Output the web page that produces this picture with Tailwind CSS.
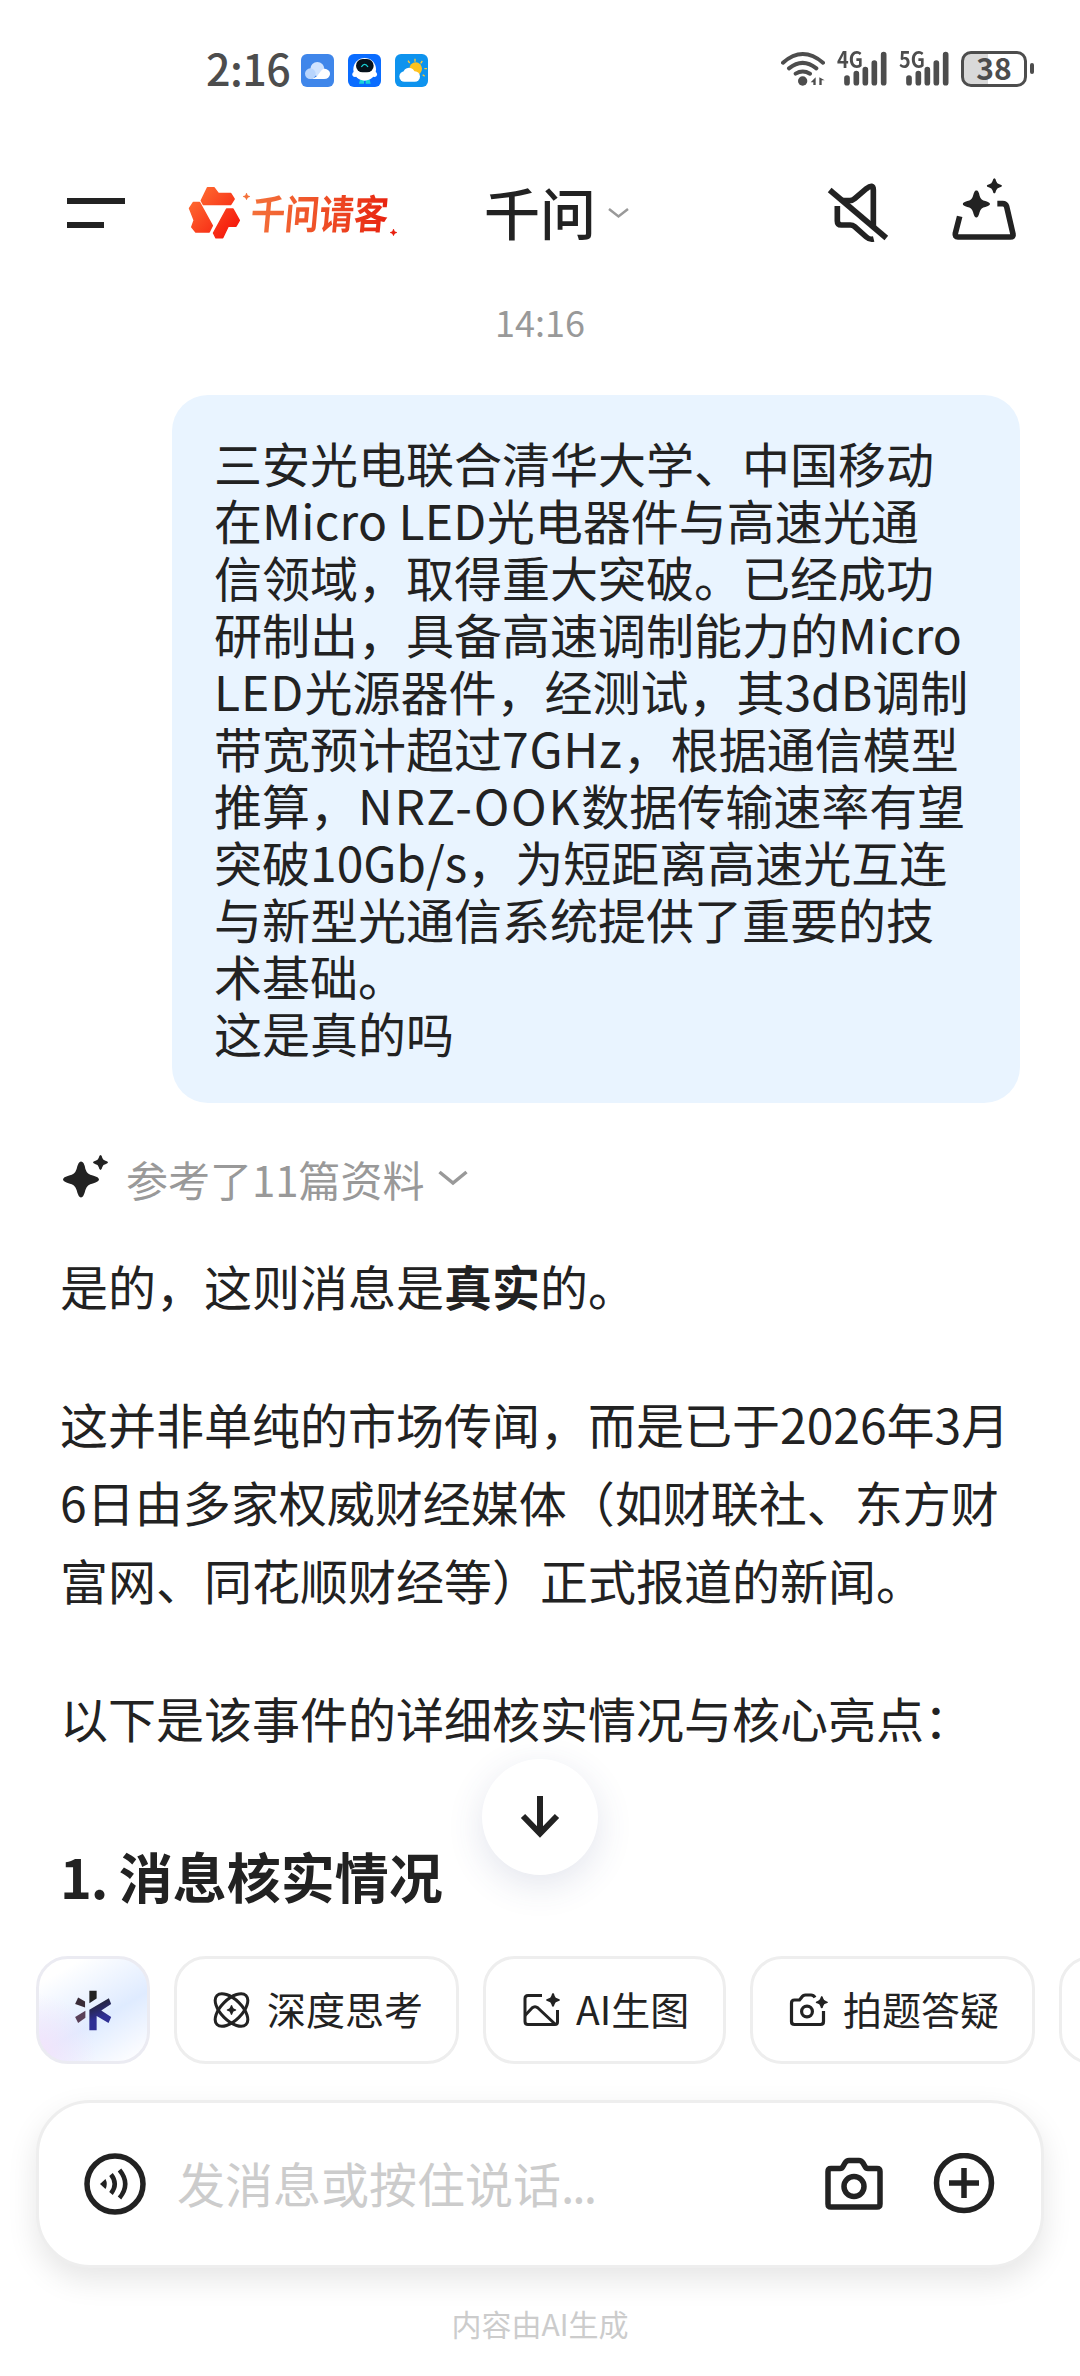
<!DOCTYPE html>
<html lang="zh-CN">
<head>
    <meta charset="UTF-8" />
    <meta name="viewport" content="width=device-width, initial-scale=1.0" />
    <title>千问</title>
    <script src="https://cdn.jsdelivr.net/npm/@tailwindcss/browser@4"></script>
</head>
<body class="bg-white font-['Noto_Sans_CJK_SC',sans-serif] text-[#222]">

<!-- 公用图形 -->
<svg class="hidden">
    <symbol id="star" viewBox="0 0 82 82">
        <path d="M41 0Q48 0 51 17Q55 30 68 32Q82 36 82 41Q82 46 68 50Q55 52 51 65Q47 82 41 82Q35 82 31 65Q27 52 14 50Q0 46 0 41Q0 36 14 32Q27 30 31 17Q35 0 41 0Z" fill="currentColor" stroke="none"/>
    </symbol>
    <symbol id="bars" viewBox="0 0 150 120">
        <g stroke="currentColor" stroke-width="17" stroke-linecap="round">
            <path d="M30 84V98M58 71V98M85 59V98M112 39V98M140 14V98"/>
        </g>
    </symbol>
</svg>

<div class="flex h-[2376px] w-[1080px] flex-col overflow-hidden">
    <!-- 状态栏 -->
    <div class="flex h-[140px] shrink-0 items-center pr-[46px] pl-[206px] text-[#4d4d4d]">
        <span class="w-[95px] pb-[5px] text-[43px] leading-none font-medium tracking-[-0.5px]">2:16</span>
        <div class="flex gap-[14px]">
            <svg class="size-[33px] rounded-[6px]" viewBox="0 0 99 99">
                <rect width="99" height="99" fill="#3f86ea"/>
                <circle cx="49" cy="45" r="21" fill="#cfe3ff"/>
                <circle cx="28" cy="59" r="16" fill="#b8d5fd"/>
                <path d="M24 75Q44 75 56 56Q66 40 77 46Q88 51 87 61Q85 75 69 75Z" fill="#fff"/>
            </svg>
            <svg class="size-[33px] rounded-[6px]" viewBox="0 0 99 99">
                <rect width="99" height="99" fill="#0a6cff"/>
                <path d="M36 77h12v12H33zM53 77h12l3 12H53z" fill="#19d3d8"/>
                <circle cx="50" cy="46" r="34" fill="#fff"/>
                <circle cx="21" cy="61" r="8" fill="#fff"/>
                <circle cx="79" cy="61" r="8" fill="#fff"/>
                <rect x="24" y="15" width="53" height="40" rx="20" fill="#06121c"/>
                <path d="M40 39Q50 23 60 39" fill="none" stroke="#19d3d8" stroke-width="4"/>
            </svg>
            <svg class="size-[33px] rounded-[6px]" viewBox="0 0 99 99">
                <rect width="99" height="99" fill="#0e93ee"/>
                <path d="M60 14v9M39 20l5 7M82 21l-5 7M88 44h8M83 62l6 5" stroke="#ffc933" stroke-width="4"/>
                <circle cx="62" cy="44" r="19" fill="#ffc21f"/>
                <circle cx="42" cy="58" r="17" fill="#fff"/>
                <rect x="13" y="52" width="62" height="31" rx="15.500" fill="#fff"/>
            </svg>
        </div>
        <div class="ml-auto flex items-center gap-[12px]">
            <svg class="h-[40px] w-[44px]" viewBox="60 30 132 120" fill="none" stroke="currentColor" stroke-width="12" stroke-linecap="round">
                <path d="M66 68Q125 16 186 68M84 85Q125 52 166 85M104 101Q125 88 147 101"/>
                <circle cx="125" cy="123" r="14" fill="currentColor" stroke="none"/>
                <path d="M149 127L164 112V135H157V127ZM175 112L191 121H182V135H175Z" fill="currentColor" stroke="none"/>
            </svg>
            <div class="relative h-[40px] w-[50px]">
                <svg class="h-[40px] w-[50px]"><use href="#bars"/></svg>
                <span class="absolute -top-[2px] left-0 origin-left scale-x-90 text-[22px] leading-[20px] font-bold">4G</span>
            </div>
            <div class="relative h-[40px] w-[50px]">
                <svg class="h-[40px] w-[50px]"><use href="#bars"/></svg>
                <span class="absolute -top-[2px] left-0 origin-left scale-x-90 text-[22px] leading-[20px] font-bold">5G</span>
            </div>
            <div class="flex items-center gap-[3px]">
                <div class="-mt-[3px] flex h-[36px] w-[66px] items-center justify-center rounded-[10px] border-[3px] border-[#4d4d4d] bg-[linear-gradient(90deg,#d9d9d9_40%,#fff_40%)] pb-[3px] text-[30px] leading-none font-bold">38</div>
                <div class="-mt-[3px] h-[11px] w-[4px] rounded-[2px] bg-[#4d4d4d]"></div>
            </div>
        </div>
    </div>

    <!-- 顶部导航 -->
    <header class="flex h-[146px] shrink-0 items-center pr-[63px] pl-[67px]">
        <div class="flex w-[58px] flex-col gap-[18px]">
            <div class="h-[6px] bg-[#222]"></div>
            <div class="h-[6px] w-[37px] bg-[#222]"></div>
        </div>
        <div class="relative ml-[61px] flex w-[210px] items-center">
            <svg class="h-[56px] w-[56px] shrink-0" viewBox="0 0 56 56">
                <defs>
                    <linearGradient id="logo" gradientUnits="userSpaceOnUse" x1="5" y1="8" x2="48" y2="48">
                        <stop offset="0" stop-color="#ff7033"/>
                        <stop offset="1" stop-color="#f5170c"/>
                    </linearGradient>
                </defs>
                <g fill="url(#logo)" stroke="url(#logo)" stroke-width="1.500" stroke-linejoin="round">
                    <path d="M15.300 15.700L21.600 2.700H28L32.300 8.400H44.600L48.100 14L44.600 19.500H17.500Z"/>
                    <path d="M3.500 23.300L7.400 17.500H13.600L26.300 40.700L23.200 47H9.800L5.800 42L8.200 35.300Z"/>
                    <path d="M40.600 24H47L53.300 35.300L50 41.200H42.200L36.700 52.800H30L27.500 48Z"/>
                </g>
            </svg>
            <span class="-mt-[2px] ml-[9px] inline-block shrink-0 origin-left scale-x-[0.86] -skew-x-6 bg-linear-to-r from-[#f4713a] to-[#e8200f] bg-clip-text text-[40px] leading-[56px] font-bold whitespace-nowrap text-transparent">千问请客</span>
            <svg class="absolute top-[8px] left-[57px] size-[7px] text-[#f4713a]"><use href="#star"/></svg>
            <svg class="absolute top-[44px] left-[204px] size-[7px] text-[#e8200f]"><use href="#star"/></svg>
        </div>
        <h1 class="-mt-[5px] ml-[88px] w-[110px] text-[56px] leading-none font-medium whitespace-nowrap">千问</h1>
        <svg class="ml-[14px] h-[12px] w-[21px]" viewBox="0 0 21 12" fill="none" stroke="#999" stroke-width="2.500"><path d="M1 2L10.500 9.500L20 2"/></svg>
        <svg class="ml-auto size-[62px]" viewBox="200 66 186 186" fill="none" stroke="currentColor" stroke-width="17">
            <path d="M245 122H268Q276 122 283 116L318 86Q339 70 339 90V200"/>
            <path d="M231 138V183Q231 195 243 195H270Q277 195 283 200L318 231Q328 240 340 237"/>
            <path d="M208 90L378 234"/>
        </svg>
        <svg class="ml-[62px] h-[72px] w-[66px]" viewBox="573 51 198 216" fill="none" stroke="currentColor" stroke-width="17">
            <path d="M599 169L586 220Q584 231 594 231H751Q761 231 759 222L740 140Q737 131 728 131H712"/>
            <use href="#star" x="608" y="91" width="82" height="82"/>
            <use href="#star" x="680" y="54" width="46" height="47"/>
        </svg>
    </header>

    <!-- 对话内容 -->
    <main class="relative flex shrink-0 flex-col px-[60px] text-[48px]">
        <time class="mt-[8px] text-center text-[36px] leading-[54px] text-[#999]">14:16</time>

        <div class="mt-[47px] h-[708px] w-[848px] self-end rounded-[36px] bg-[#e9f4ff] pt-[39px] pl-[42px] leading-[57px] whitespace-nowrap">
            <p>三安光电联合清华大学、中国移动</p>
            <p>在<span class="tracking-[0.3px]">Micro LED</span>光电器件与高速光通</p>
            <p>信领域，取得重大突破。已经成功</p>
            <p>研制出，具备高速调制能力的Micro</p>
            <p><span class="tracking-[1px]">LED</span>光源器件，经测试，其3dB调制</p>
            <p>带宽预计超过<span class="tracking-[0.8px]">7GHz</span>，根据通信模型</p>
            <p>推算，<span class="tracking-[1.8px]">NRZ-OOK</span>数据传输速率有望</p>
            <p>突破10Gb/s，为短距离高速光互连</p>
            <p>与新型光通信系统提供了重要的技</p>
            <p>术基础。</p>
            <p>这是真的吗</p>
        </div>

        <div class="mt-[45px] flex h-[60px] items-center text-[42px] text-[#999]">
            <div class="flex w-[66px] shrink-0">
                <svg class="h-[48px] w-[50px] text-[#222]" viewBox="0 0 50 48">
                    <use href="#star" x="3" y="7" width="36" height="37"/>
                    <use href="#star" x="33" y="1" width="15" height="15"/>
                </svg>
            </div>
            <span>参考了11篇资料</span>
            <svg class="ml-[13px] h-[16px] w-[30px]" viewBox="0 0 30 16" fill="none" stroke="currentColor" stroke-width="3.500"><path d="M1.500 2L15 13L28.500 2"/></svg>
        </div>

        <p class="mt-[38px] leading-[78px]">是的，这则消息是<b>真实</b>的。</p>
        <p class="mt-[60px] leading-[78px] whitespace-nowrap">这并非单纯的市场传闻，而是已于2026年3月<br>6日由多家权威财经媒体（如财联社、东方财<br>富网、同花顺财经等）正式报道的新闻。</p>
        <p class="mt-[60px] leading-[78px]">以下是该事件的详细核实情况与核心亮点：</p>
        <h2 class="mt-[79px] text-[54px] leading-[81px] font-bold"><span class="tracking-[-1px]">1. </span>消息核实情况</h2>

        <!-- 回到底部 -->
        <button class="absolute bottom-[41px] left-[482px] flex size-[116px] items-center justify-center rounded-full bg-white shadow-[0_10px_36px_rgba(60,70,130,0.14)]">
            <svg class="h-[44px] w-[40px]" viewBox="0 0 40 44" fill="none" stroke="currentColor" stroke-width="6"><path d="M20 1V38M3 21L20 38.500L37 21"/></svg>
        </button>
    </main>

    <!-- 快捷功能 -->
    <nav class="mt-[40px] flex h-[108px] shrink-0 gap-[24px] pl-[36px] text-[39px] whitespace-nowrap">
        <div class="flex w-[114px] shrink-0 items-center justify-center rounded-[32px] border-[3px] border-[#ebebf2] bg-[radial-gradient(circle_at_0%_90%,#f3e4fb_0%,transparent_40%),linear-gradient(150deg,#fff_15%,#dfebff_58%,#fbfcff_92%)]">
            <svg class="h-[41px] w-[38px]" viewBox="159 148 114 124">
                <defs>
                    <linearGradient id="ask" gradientUnits="userSpaceOnUse" x1="200" y1="160" x2="240" y2="260">
                        <stop offset="0.200" stop-color="#222"/>
                        <stop offset="0.750" stop-color="#2f2f94"/>
                    </linearGradient>
                </defs>
                <g fill="url(#ask)">
                    <path d="M205 150H227V174L205 188Z"/>
                    <path d="M264 173L271 190L241 210L271 230L263 248L227 227V270H205V208Z"/>
                </g>
                <path d="M171 171L192 183V201L162 190Z" fill="#3a2c38"/>
                <path d="M193 211V232L171 248L162 230Z" fill="#5a4058"/>
            </svg>
        </div>
        <div class="flex w-[285px] shrink-0 items-center gap-[15px] rounded-[32px] border-[3px] border-[#eee] pl-[36px]">
            <svg class="size-[39px]" viewBox="0 0 39 39" fill="none" stroke="currentColor" stroke-width="3">
                <ellipse cx="18.500" cy="19" rx="20.500" ry="10.500" transform="rotate(45 18.500 19)"/>
                <ellipse cx="18.500" cy="19" rx="20.500" ry="10.500" transform="rotate(-45 18.500 19)"/>
                <use href="#star" x="13.500" y="14" width="10" height="10"/>
            </svg>
            <span class="-mt-[4px]">深度思考</span>
        </div>
        <div class="flex w-[243px] shrink-0 items-center gap-[15px] rounded-[32px] border-[3px] border-[#eee] pl-[36px]">
            <svg class="size-[39px]" viewBox="0 0 39 39" fill="none" stroke="currentColor" stroke-width="3">
                <path d="M20 4.500H6Q3 4.500 3 7.500V30.500Q3 33.500 6 33.500H33Q35.500 33.500 35.500 31V19"/>
                <path d="M3 24.500L10 17Q13 14.500 16 17L33 33"/>
                <use href="#star" x="24" y="2" width="14" height="14"/>
            </svg>
            <span class="-mt-[4px]">AI生图</span>
        </div>
        <div class="flex w-[285px] shrink-0 items-center gap-[15px] rounded-[32px] border-[3px] border-[#eee] pl-[36px]">
            <svg class="size-[39px]" viewBox="0 0 39 39" fill="none" stroke="currentColor" stroke-width="3.200">
                <path d="M26 6.500Q24.500 4 22 4H16.500Q14 4 12.500 6.500L10.500 9H5.500Q2.500 9 2.500 12V30.500Q2.500 33.500 5.500 33.500H31.500Q34.500 33.500 34.500 30.500V20"/>
                <circle cx="18" cy="20.500" r="5.400"/>
                <use href="#star" x="26.500" y="5" width="12.500" height="12.500"/>
            </svg>
            <span class="-mt-[4px]">拍题答疑</span>
        </div>
        <div class="w-[285px] shrink-0 rounded-[32px] border-[3px] border-[#eee]"></div>
    </nav>

    <!-- 输入框 -->
    <div class="mx-[36px] mt-[36px] flex h-[168px] shrink-0 items-center rounded-[54px] border-[3px] border-[#eee] bg-white pr-[46px] pl-[45px] shadow-[0_12px_30px_rgba(0,0,0,0.1)]">
        <svg class="size-[62px]" viewBox="0 0 62 62" fill="none" stroke="currentColor" stroke-width="5.500">
            <circle cx="31" cy="31" r="28"/>
            <path d="M16 31L21.500 26Q24 31 21.500 36Z" fill="currentColor" stroke="none"/>
            <path d="M27 21.500Q34.500 31 27 40.500M35.500 17Q47 31 35.500 45" stroke-width="4.500"/>
        </svg>
        <span class="-mt-[4px] ml-[31px] text-[48px] text-[#ccc]">发消息或按住说话<span class="tracking-[-2px]">...</span></span>
        <svg class="ml-auto size-[60px]" viewBox="0 0 60 60" fill="none" stroke="currentColor" stroke-width="5.500">
            <path d="M7 14.500H16Q18 14.500 19 12.500L21 9Q22.500 6.500 25 6.500H35Q37.500 6.500 39 9L41 12.500Q42 14.500 44 14.500H53Q56 14.500 56 17.500V50Q56 53 53 53H7Q4 53 4 50V17.500Q4 14.500 7 14.500Z"/>
            <circle cx="30" cy="32.500" r="10"/>
        </svg>
        <svg class="ml-[49px] size-[62px]" viewBox="0 0 62 62" fill="none" stroke="currentColor" stroke-width="5.500">
            <circle cx="31" cy="30" r="27.500"/>
            <path d="M31 15V45M16 30H46"/>
        </svg>
    </div>
    <p class="mt-[33px] text-center text-[30px] leading-[45px] text-[#ccc]">内容由AI生成</p>
</div>
</body>
</html>
